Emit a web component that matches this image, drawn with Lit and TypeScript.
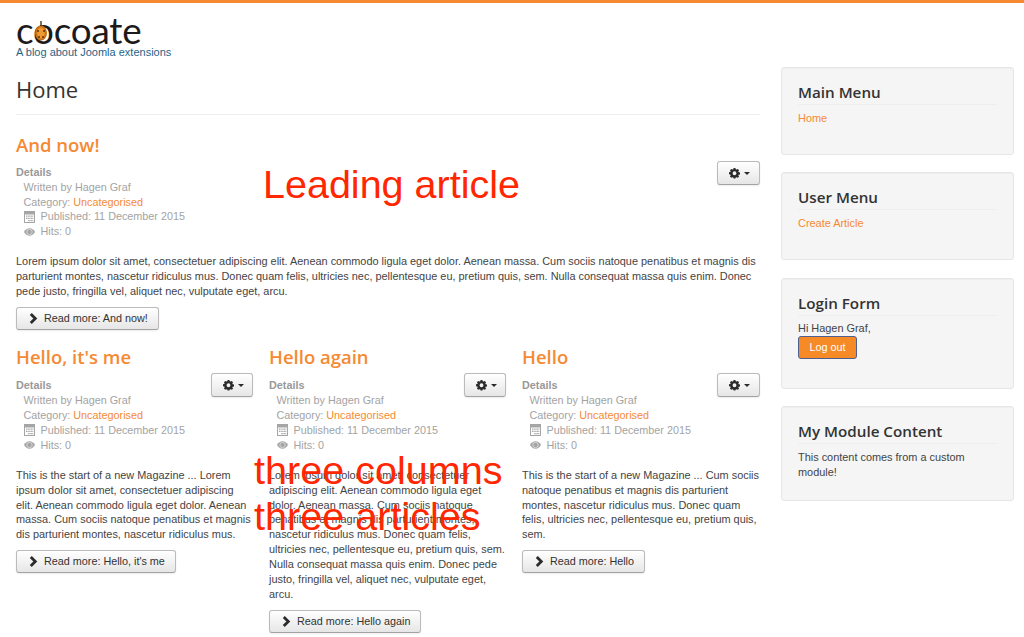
import { LitElement, html, css, svg } from "lit";
import { customElement } from "lit/decorators.js";

const LOREM_LEAD = "Lorem ipsum dolor sit amet, consectetuer adipiscing elit. Aenean commodo ligula eget dolor. Aenean massa. Cum sociis natoque penatibus et magnis dis parturient montes, nascetur ridiculus mus. Donec quam felis, ultricies nec, pellentesque eu, pretium quis, sem. Nulla consequat massa quis enim. Donec pede justo, fringilla vel, aliquet nec, vulputate eget, arcu.";

const gear = html`<svg class="gear" width="11" height="12" viewBox="0 0 12 12"><path fill="#2b2b2b" fill-rule="evenodd" d="M5 .5h2l.3 1.4 1 .4L9.500 1.500 11 3l-.8 1.200.4 1 1.400.3v2l-1.400.3-.4 1 .8 1.200L9.500 11.300l-1.200-.8-1 .4L7 12H5l-.3-1.100-1-.4-1.200.8L1 9.800l.8-1.200-.4-1L0 7.300v-2l1.400-.3.4-1L1 2.900 2.500 1.500l1.200.8 1-.4zM6 4.200a2.100 2.100 0 1 0 0 4.200A2.100 2.100 0 0 0 6 4.200z"/></svg>`;
const chevron = html`<svg class="chev" width="9" height="11" viewBox="0 0 9 11"><path fill="none" stroke="#2b2b2b" stroke-width="2.800" d="M1.800 1l4.500 4.500L1.800 10"/></svg>`;
const calendar = html`<svg class="ic" width="11" height="12" viewBox="0 0 11 12"><path fill="#a5a5a5" fill-rule="evenodd" d="M0 0h11v12H0zM1 3.500V11h9V3.500z"/><path fill="#a5a5a5" d="M2 4.500h1.500v1.300H2zM4.200 4.500h1.500v1.300H4.200zM6.400 4.500h1.500v1.300H6.400zM8.300 4.500h1v1.300h-1zM2 6.700h1.500v1.300H2zM4.200 6.700h1.500v1.300H4.200zM6.400 6.700h1.500v1.300H6.400zM8.300 6.700h1v1.300h-1zM4.200 8.900h1.500v1.300H4.200zM6.400 8.900h1.500v1.300H6.400zM8.300 8.900h1v1.300h-1z"/></svg>`;
const eye = html`<svg class="ic" width="11" height="8" viewBox="0 0 11 8"><path fill="#a5a5a5" d="M0 4c1.300-2.400 3.300-3.700 5.500-3.700S9.700 1.600 11 4c-1.300 2.400-3.300 3.700-5.500 3.700S1.300 6.400 0 4z"/><circle cx="5.500" cy="4" r="2.700" fill="none" stroke="#e2e2e2" stroke-width=".8"/></svg>`;
const bug = svg`<svg class="bug" width="14" height="20" viewBox="0 0 14 20"><ellipse cx="7" cy="12" rx="6" ry="7.500" fill="#c9701a"/><ellipse cx="7" cy="12" rx="3.800" ry="5.500" fill="#ef9a2e"/><path d="M7 0v5" stroke="#3a2410" stroke-width="1.300"/><circle cx="4" cy="10" r=".9" fill="#4a2a10"/><circle cx="10" cy="10" r=".9" fill="#4a2a10"/><circle cx="5" cy="16" r=".9" fill="#4a2a10"/><circle cx="9" cy="16" r=".9" fill="#4a2a10"/></svg>`;

interface Article { title: string; text: string; more: string; }

const columns: Article[] = [
  { title: "Hello, it's me", text: "This is the start of a new Magazine ... Lorem ipsum dolor sit amet, consectetuer adipiscing elit. Aenean commodo ligula eget dolor. Aenean massa. Cum sociis natoque penatibus et magnis dis parturient montes, nascetur ridiculus mus.", more: "Read more: Hello, it's me" },
  { title: "Hello again", text: "Lorem ipsum dolor sit amet, consectetuer adipiscing elit. Aenean commodo ligula eget dolor. Aenean massa. Cum sociis natoque penatibus et magnis dis parturient montes, nascetur ridiculus mus. Donec quam felis, ultricies nec, pellentesque eu, pretium quis, sem. Nulla consequat massa quis enim. Donec pede justo, fringilla vel, aliquet nec, vulputate eget, arcu.", more: "Read more: Hello again" },
  { title: "Hello", text: "This is the start of a new Magazine ... Cum sociis natoque penatibus et magnis dis parturient montes, nascetur ridiculus mus. Donec quam felis, ultricies nec, pellentesque eu, pretium quis, sem.", more: "Read more: Hello" },
];

@customElement("app-root")
export class AppRoot extends LitElement {
  static styles = css`
    :host { display: block; position: relative; width: 1024px; height: 637px; overflow: hidden; background: #fff; border-top: 3px solid #f58a33; box-sizing: border-box; font: 10.8px/15px "Liberation Sans", Arial, sans-serif; color: #444; }
    .logo { padding: 12px 0 0 16px; height: 42px; box-sizing: content-box; }
    .brand { position: relative; display: block; height: 30px; font: 36.800px/30px "Lato", sans-serif; color: #1d1a1c; letter-spacing: -.2px; }
    .bug { position: absolute; left: 18px; top: 6px; }
    .tag { display: block; font-size: 11px; line-height: 12px; color: #1f6388; margin-top: 1px; }
    .layout { display: flex; gap: 21px; padding: 0 10px 0 16px; }
    main { width: 744px; flex: none; }
    aside { flex: 1; padding-top: 10px; display: flex; flex-direction: column; gap: 17.500px; }
    h1 { margin: 0; font: 500 22px/30px "Open Sans", sans-serif; color: #333; padding: 17px 0 10px; border-bottom: 1px solid #eee; height: 30px; box-sizing: content-box; }
    .article { position: relative; }
    .lead { padding-top: 18px; }
    h2 { margin: 0; font: 600 18.500px/24px "Open Sans", sans-serif; color: #f58a33; }
    .meta { margin-top: 8px; color: #a3a3a3; line-height: 14.800px; }
    .col .meta { margin-top: 9px; line-height: 15px; }
    .meta b { display: block; font-weight: 700; color: #999; }
    .meta div { padding-left: 7.500px; display: flex; align-items: center; }
    .meta a, a { color: #f58a33; text-decoration: none; }
    .meta a { margin-left: 3px; }
    .ic { width: 11px; margin-right: 6px; flex: none; }
    p { margin: 15px 0 0; color: #444; font-size: 10.920px; line-height: 14.900px; }
    .col p { margin-top: 15px; }
    .btn { display: inline-flex; align-items: center; box-sizing: border-box; height: 23px; padding: 0 10px 0 12px; background: linear-gradient(#fff, #e6e6e6); border: 1px solid #bbb; border-bottom-color: #a2a2a2; border-radius: 3px; box-shadow: 0 1px 2px rgba(0,0,0,.08); color: #333; font-size: 10.8px; }
    .more { margin-top: 8px; }
    .chev { margin-right: 6px; }
    .tool { position: absolute; right: 0; width: 42px; height: 24px; padding: 0 0 0 11px; gap: 4px; }
    .lead .tool { top: 46px; width: 43px; }
    .col .tool { top: 28.500px; }
    .col:last-child .tool { width: 43px; }
    .caret { width: 0; height: 0; border: 3.500px solid transparent; border-top-color: #2b2b2b; border-bottom: 0; }
    .cols { display: grid; grid-template-columns: 237px 237px 238px; gap: 16px; margin-top: 15px; }
    .col { position: relative; }
    .card { box-sizing: border-box; background: #f5f5f5; border: 1px solid #e6e6e6; border-radius: 3px; padding: 14px 16px 0; box-shadow: inset 0 1px 1px rgba(0,0,0,.03); font-size: 10.920px; }
    h3 { margin: 0 0 5.500px; font: 600 15.200px/20px "Open Sans", sans-serif; color: #333; padding-bottom: 2px; border-bottom: 1px solid #eee; }
    .login { display: inline-flex; align-items: center; justify-content: center; width: 59px; height: 23px; box-sizing: border-box; background: #f58a26; border: 1px solid #4c5f8f; border-radius: 3px; color: #fff; font-size: 10.8px; }
    .note { position: absolute; color: #ff2600; font-family: "Liberation Sans", Arial, sans-serif; white-space: nowrap; line-height: 46px; }
    .n1 { left: 263px; top: 158px; font-size: 39.500px; }
    .n2 { left: 254px; top: 444px; font-size: 39.600px; }
    .n3 { left: 254px; top: 490px; font-size: 39.600px; }
  `;

  private meta() {
    return html`<div class="meta">
      <b>Details</b>
      <div>Written by Hagen Graf</div>
      <div>Category:<a href="#">Uncategorised</a></div>
      <div>${calendar}Published: 11 December 2015</div>
      <div>${eye}Hits: 0</div>
    </div>`;
  }

  private tool() {
    return html`<span class="btn tool">${gear}<i class="caret"></i></span>`;
  }

  render() {
    const cardHeights = [87.5, 88, 111, 95];
    return html`
      <header class="logo">
        <span class="brand">cocoate${bug}</span>
        <span class="tag">A blog about Joomla extensions</span>
      </header>
      <div class="layout">
        <main>
          <h1>Home</h1>
          <article class="article lead">
            <h2>And now!</h2>
            ${this.tool()}
            ${this.meta()}
            <p>${LOREM_LEAD}</p>
            <span class="btn more">${chevron}Read more: And now!</span>
          </article>
          <div class="cols">
            ${columns.map((a) => html`<article class="col">
              <h2>${a.title}</h2>
              ${this.tool()}
              ${this.meta()}
              <p>${a.text}</p>
              <span class="btn more">${chevron}${a.more}</span>
            </article>`)}
          </div>
        </main>
        <aside>
          <section class="card" style="height:${cardHeights[0]}px"><h3>Main Menu</h3><a href="#">Home</a></section>
          <section class="card" style="height:${cardHeights[1]}px"><h3>User Menu</h3><a href="#">Create Article</a></section>
          <section class="card" style="height:${cardHeights[2]}px"><h3>Login Form</h3><div>Hi Hagen Graf,</div><span class="login">Log out</span></section>
          <section class="card" style="height:${cardHeights[3]}px"><h3>My Module Content</h3><div>This content comes from a custom module!</div></section>
        </aside>
      </div>
      <span class="note n1">Leading article</span>
      <span class="note n2">three columns</span>
      <span class="note n3">three articles</span>
    `;
  }
}
